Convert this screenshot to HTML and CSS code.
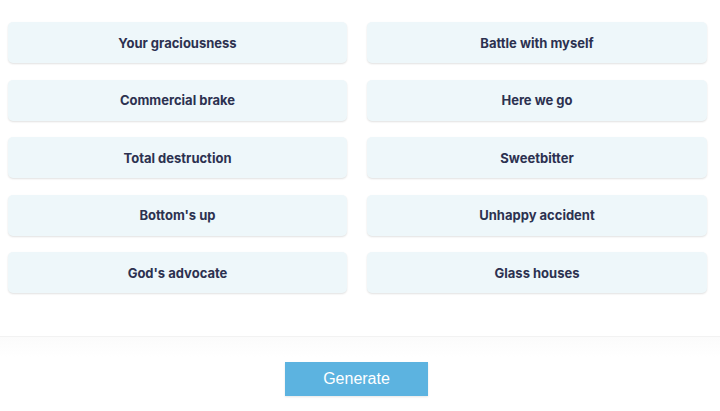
FILE: index.html
```html
<!DOCTYPE html>
<html>
<head>
<meta charset="utf-8">
<link rel="stylesheet" href="styles.css">
</head>
<body>
<main class="grid">
  <div class="card">Your graciousness</div>
  <div class="card">Battle with myself</div>
  <div class="card">Commercial brake</div>
  <div class="card">Here we go</div>
  <div class="card">Total destruction</div>
  <div class="card">Sweetbitter</div>
  <div class="card">Bottom's up</div>
  <div class="card">Unhappy accident</div>
  <div class="card">God's advocate</div>
  <div class="card">Glass houses</div>
</main>
<footer class="footer">
  <button class="generate">Generate</button>
</footer>
</body>
</html>
```
FILE: styles.css
```css
html, body {
  margin: 0;
  padding: 0;
  background: #ffffff;
}
body {
  width: 720px;
  height: 411px;
  overflow: hidden;
}
.grid {
  display: grid;
  grid-template-columns: 339px 340px;
  column-gap: 20px;
  row-gap: 16.5px;
  padding: 22px 0 0 8px;
  height: 314px;
  box-sizing: border-box;
  align-content: start;
}
.card {
  height: 41px;
  display: flex;
  align-items: center;
  justify-content: center;
  background: #eef7fa;
  border-radius: 5px;
  box-shadow: 0 1px 2px rgba(0, 0, 0, 0.12);
  font-family: Inter, "Noto Sans", sans-serif;
  font-weight: 700;
  font-size: 13px;
  color: #2c3150;
}
.footer {
  margin-top: 22px;
  border-top: 1px solid #f2f2f2;
  background: linear-gradient(#fbfbfb, #ffffff 20px);
  height: 80px;
  display: flex;
  justify-content: center;
  padding-top: 25px;
  box-sizing: border-box;
}
.generate {
  width: 143px;
  height: 34px;
  border: none;
  background: #5cb3e0;
  color: #ffffff;
  font-family: "Liberation Sans", Arial, sans-serif;
  font-size: 16px;
  margin-right: 7px;
  border-radius: 0;
  box-shadow: 0 1px 2px rgba(0, 0, 0, 0.1);
}
```
